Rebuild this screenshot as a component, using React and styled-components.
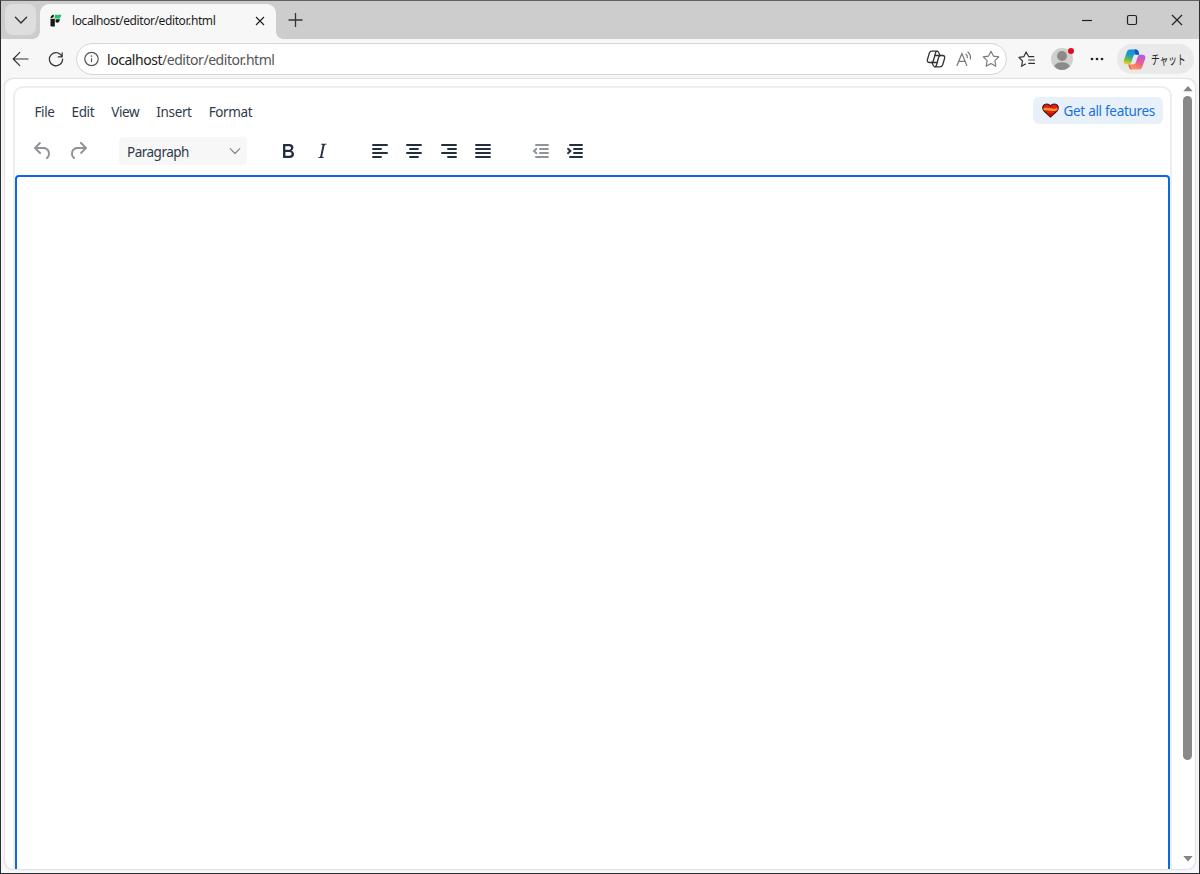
import styled, { createGlobalStyle } from 'styled-components'

export default function App() {
	return (
		<Window>
			<GlobalStyle />
			<TitleBar>
				<TabMenuButton>
					<ChevronIcon width={14} color='#333' />
				</TabMenuButton>
				<Tab>
					<SiteIcon />
					<TabTitle>localhost/editor/editor.html</TabTitle>
					<CrossIcon size={10} />
				</Tab>
				<NewTab>
					<PlusIcon />
				</NewTab>
				<WindowControls>
					<svg width='12' height='12' viewBox='0 0 12 12'>
						<path d='M1 6.5h10' stroke='#222' strokeWidth='1.2' />
					</svg>
					<svg width='12' height='12' viewBox='0 0 12 12'>
						<rect x='1.5' y='1.5' width='9' height='9' rx='1.5' fill='none' stroke='#222' strokeWidth='1.2' />
					</svg>
					<CrossIcon size={12} />
				</WindowControls>
			</TitleBar>
			<NavBar>
				<NavButtons>
					<BackIcon />
					<ReloadIcon />
				</NavButtons>
				<AddressBar>
					<InfoIcon />
					<Url>
						localhost<span>/editor/editor.html</span>
					</Url>
					<AddressActions>
						<SwirlOutlineIcon />
						<ReadAloudIcon />
						<StarIcon />
					</AddressActions>
				</AddressBar>
				<FavoritesIcon />
				<Avatar>
					<AvatarIcon />
					<AvatarDot />
				</Avatar>
				<MoreIcon />
				<ChatButton>
					<SwirlIcon />
					<span>チャット</span>
				</ChatButton>
			</NavBar>
			<Page>
				<Editor>
					<MenuBar>
						<MenuItem>File</MenuItem>
						<MenuItem>Edit</MenuItem>
						<MenuItem>View</MenuItem>
						<MenuItem>Insert</MenuItem>
						<MenuItem>Format</MenuItem>
						<Promotion>
							<HeartIcon />
							<span>Get all features</span>
						</Promotion>
					</MenuBar>
					<Toolbar>
						<Group $gap={11.5}>
							<ToolIcon name='undo' disabled />
							<ToolIcon name='redo' disabled />
						</Group>
						<FormatSelect>
							<span>Paragraph</span>
							<ChevronIcon width={12} color='#83888e' />
						</FormatSelect>
						<Group $start={28.5}>
							<ToolIcon name='bold' />
							<ToolIcon name='italic' />
						</Group>
						<Group $start={33.5}>
							<ToolIcon name='alignLeft' />
							<ToolIcon name='alignCenter' />
							<ToolIcon name='alignRight' />
							<ToolIcon name='alignJustify' />
						</Group>
						<Group $start={33.5}>
							<ToolIcon name='outdent' disabled />
							<ToolIcon name='indent' />
						</Group>
					</Toolbar>
					<EditArea />
				</Editor>
				<Scrollbar>
					<svg width='10' height='7' viewBox='0 0 10 7'>
						<path d='M5 0 9.7 5.3H.3Z' fill='#858585' />
					</svg>
					<Thumb />
					<svg width='10' height='7' viewBox='0 0 10 7'>
						<path d='M5 5.5.3 0h9.4Z' fill='#858585' />
					</svg>
				</Scrollbar>
			</Page>
		</Window>
	)
}

const toolPaths = {
	undo: 'M6.4 8H12c3.7 0 6.2 2 6.8 5.1.6 2.7-.4 5.6-2.3 6.8a1 1 0 0 1-1-1.8c1.1-.6 1.8-2.7 1.4-4.6-.5-2.1-2.1-3.5-4.9-3.5H6.4l3.3 3.3a1 1 0 1 1-1.4 1.4l-5-5a1 1 0 0 1 0-1.4l5-5a1 1 0 0 1 1.4 1.4L6.4 8Z',
	redo: 'M17.6 10H12c-2.8 0-4.4 1.4-4.9 3.5-.4 2 .3 4 1.4 4.6a1 1 0 1 1-1 1.8c-2-1.2-2.9-4.1-2.3-6.8.6-3 3-5.1 6.8-5.1h5.6l-3.3-3.3a1 1 0 1 1 1.4-1.4l5 5a1 1 0 0 1 0 1.4l-5 5a1 1 0 0 1-1.4-1.4l3.3-3.3Z',
	bold: 'M7.8 19c-.3 0-.5 0-.6-.2l-.2-.5V5.7c0-.2 0-.4.2-.5l.6-.2h5c1.5 0 2.7.3 3.5 1 .7.6 1.1 1.4 1.1 2.5a3 3 0 0 1-.6 1.9c-.4.6-1 1-1.6 1.2.4.1.9.3 1.3.6s.8.7 1 1.2c.4.4.5 1 .5 1.6 0 1.3-.4 2.3-1.3 3-.8.7-2.1 1-3.8 1H7.8Zm5-8.3c.6 0 1.2-.1 1.6-.5.4-.3.6-.7.6-1.3 0-1.1-.8-1.7-2.3-1.7H9.3v3.5h3.4Zm.5 6c.7 0 1.3-.1 1.7-.4.4-.4.6-.9.6-1.5s-.2-1-.7-1.4c-.4-.3-1-.4-2-.4H9.4v3.8h4Z',
	italic: 'm16.7 4.7-.1.9h-.3c-.6 0-1 0-1.4.3-.3.3-.4.6-.5 1.1l-2.1 9.8v.6c0 .5.4.8 1.4.8h.2l-.2.8H8l.2-.8h.2c1.1 0 1.8-.5 2-1.5l2-9.8.1-.5c0-.6-.4-.8-1.4-.8h-.3l.2-.9h5.8Z',
}

const toolLines = {
	alignLeft: 'M5 6h14M5 10h8M5 14h14M5 18h8',
	alignCenter: 'M5 6h14M8 10h8M5 14h14M8 18h8',
	alignRight: 'M5 6h14M11 10h8M5 14h14M11 18h8',
	alignJustify: 'M5 6h14M5 10h14M5 14h14M5 18h14',
	outdent: 'M7 6h12M11 10h8M11 14h8M7 18h12M7.4 9.8 5 12l2.4 2.2',
	indent: 'M7 6h12M11 10h8M11 14h8M7 18h12M5 9.8 7.4 12 5 14.2',
}

function ToolIcon({ name, disabled }) {
	return (
		<ToolButton $disabled={disabled}>
			<svg width='24' height='24' viewBox='0 0 24 24'>
				{toolPaths[name] ? (
					<path d={toolPaths[name]} fill='currentColor' fillRule='evenodd' />
				) : (
					<path d={toolLines[name]} fill='none' stroke='currentColor' strokeWidth='1.9' strokeLinecap='round' />
				)}
			</svg>
		</ToolButton>
	)
}

function ChevronIcon({ width, color }) {
	return (
		<svg width={width} height={width} viewBox='0 0 12 12'>
			<path d='m1.2 3.7 4.8 4.8 4.8-4.8' fill='none' stroke={color} strokeWidth='1.2' strokeLinecap='round' strokeLinejoin='round' />
		</svg>
	)
}

function CrossIcon({ size }) {
	return (
		<svg width={size} height={size} viewBox={`0 0 ${size} ${size}`}>
			<path d={`M1 1 ${size - 1} ${size - 1}M${size - 1} 1 1 ${size - 1}`} stroke='#222' strokeWidth='1.2' />
		</svg>
	)
}

function PlusIcon() {
	return (
		<svg width='16' height='16' viewBox='0 0 16 16'>
			<path d='M7.5 1v14M.5 8h14' stroke='#333' strokeWidth='1.3' />
		</svg>
	)
}

function SiteIcon() {
	return (
		<svg width='12' height='13' viewBox='0 0 12 13'>
			<path d='M.5 4.8h4.3v7.7H1.8a1.3 1.3 0 0 1-1.3-1.3Z' fill='#151918' />
			<path d='M.5 4Q.7 1 4 .8L3.6 3 2 4ZM5.6 5.2H10q-.4 3-2.6 3.6l-1.8-.5Z' fill='#151918' />
			<path d='M5 .8h6.4L10 4.6H4.4Z' fill='#18c763' />
		</svg>
	)
}

function BackIcon() {
	return (
		<svg width='17' height='16' viewBox='0 0 17 16'>
			<path d='M16 8H1.2M7.8 1.4 1.2 8l6.6 6.6' fill='none' stroke='#333' strokeWidth='1.2' strokeLinecap='round' strokeLinejoin='round' />
		</svg>
	)
}

function ReloadIcon() {
	return (
		<svg width='16' height='16' viewBox='0 0 16 16'>
			<path d='M14.1 5.7A6.6 6.6 0 1 0 14.6 8M14.2 1.8v4h-4' fill='none' stroke='#333' strokeWidth='1.2' strokeLinecap='round' strokeLinejoin='round' />
		</svg>
	)
}

function InfoIcon() {
	return (
		<svg width='16' height='16' viewBox='0 0 16 16'>
			<circle cx='7.5' cy='8' r='6.7' fill='none' stroke='#555' strokeWidth='1.2' />
			<path d='M7.5 7.2v4' stroke='#555' strokeWidth='1.2' />
			<circle cx='7.5' cy='5' r='.85' fill='#555' />
		</svg>
	)
}

function SwirlOutlineIcon() {
	return (
		<svg width='20' height='18' viewBox='0 0 20 18'>
			<g fill='none' stroke='#333' strokeWidth='1.3' strokeLinejoin='round' strokeLinecap='round'>
				<path d='M13.6 4.8 12.8 2.6Q12.3 1.2 10.8 1.2H6Q4 1.2 3.4 3L1.5 9.2q-.8 3.3 1.8 3.3h2.2q1.4 0 1.8-1.5L9.5 3q.5-1.8 2-1.8' />
				<path d='m6.4 13.2.8 2.2q.5 1.4 2 1.4H14q2 0 2.6-1.8l1.9-6.2q.8-3.3-1.8-3.3h-2.2q-1.4 0-1.8 1.5L10.5 15q-.5 1.8-2 1.8' />
				<path d='M9 5.5h5.5M5.5 12.5H11' />
			</g>
		</svg>
	)
}

function ReadAloudIcon() {
	return (
		<svg width='16' height='16' viewBox='0 0 16 16'>
			<path d='m1 14.5 4.9-12 4.9 12M2.7 10.4h6.4M10 3.2q1.6 1.3 1.3 3.4M12 1.2Q15 3.8 14.4 7.8' fill='none' stroke='#777' strokeWidth='1.2' strokeLinecap='round' />
		</svg>
	)
}

function StarIcon() {
	return (
		<svg width='18' height='18' viewBox='0 0 18 18'>
			<path d='m9 1.2 2.4 4.9 5.4.8-3.9 3.8.9 5.5L9 13.6l-4.8 2.6.9-5.5-3.9-3.8 5.4-.8Z' fill='none' stroke='#777' strokeWidth='1.1' strokeLinejoin='round' />
		</svg>
	)
}

function FavoritesIcon() {
	return (
		<svg width='18' height='17' viewBox='0 0 18 17'>
			<path d='M15.8 5.7h-5L8.1 1 5.8 5.7l-4.9.7 3.6 3.6-.9 5.3 3.9-2.2M10.7 9h5.8M10.7 12.3h5.8' fill='none' stroke='#333' strokeWidth='1.2' strokeLinecap='round' strokeLinejoin='round' />
		</svg>
	)
}

function AvatarIcon() {
	return (
		<svg width='22' height='22' viewBox='0 0 22 22'>
			<circle cx='11' cy='11' r='11' fill='#d2d0ce' />
			<circle cx='11' cy='8' r='5' fill='#8c8a88' />
			<path d='M3.2 18.3Q5 14.2 11 14.2t7.8 4.1Q15.8 22 11 22t-7.8-3.7Z' fill='#8c8a88' />
		</svg>
	)
}

function MoreIcon() {
	return (
		<svg width='14' height='4' viewBox='0 0 14 4'>
			<g fill='#222'>
				<circle cx='2' cy='2' r='1.35' />
				<circle cx='7' cy='2' r='1.35' />
				<circle cx='12' cy='2' r='1.35' />
			</g>
		</svg>
	)
}

function SwirlIcon() {
	return (
		<svg width='23' height='21' viewBox='0 0 23 21'>
			<defs>
				<linearGradient id='cool' x1='.6' y1='0' x2='.3' y2='1'>
					<stop offset='0' stopColor='#1686e8' />
					<stop offset='.45' stopColor='#19a5b8' />
					<stop offset='.75' stopColor='#7cbd42' />
					<stop offset='1' stopColor='#f3cf20' />
				</linearGradient>
				<linearGradient id='warm' x1='.7' y1='0' x2='.3' y2='1'>
					<stop offset='0' stopColor='#a95ced' />
					<stop offset='.5' stopColor='#ed5b91' />
					<stop offset='1' stopColor='#ff9e48' />
				</linearGradient>
			</defs>
			<path d='M5.2 15.3h1q1 .2 1.4 1.6l.6 2q.5 1.7 2.4 1.7H8.8Q7 20.6 6.2 18.9Z' fill='#ef5a36' />
			<path d='M16.2 5.3 15.2 2Q14.6.4 12.8.4H7Q4.6.4 3.9 2.8L.9 11q-1 4.3 2.4 4.3h2.4q2 0 2.6-2l2-6.1q.5-1.9 2.4-1.9Z' fill='url(#cool)' />
			<path d='m6.8 15.5 1 3.4q.6 1.7 2.4 1.7H16q2.4 0 3.1-2.4l3-8.2q1-4.3-2.4-4.3h-2.4q-2 0-2.6 2l-2 6q-.5 1.8-2.4 1.8Z' fill='url(#warm)' />
			<path d='M11.5.4h1.3q1.8 0 2.4 1.6l1.2 3.7h-3.8Z' fill='#174fc5' />
		</svg>
	)
}

function HeartIcon() {
	return (
		<svg width='17' height='15' viewBox='0 0 17 15'>
			<path d='M8.5 14 2 8Q.2 6 1 3.5 2 1 4.7 1q2.5 0 3.8 2Q9.8 1 12.3 1 15 1 16 3.5q.8 2.5-1 4.5Z' fill='#e51c16' stroke='#42150f' strokeWidth='1.1' />
			<path d='M1.4 5.2q3.5-.9 7.1.1 3.6.9 7.1-.3l-.6 2.4q-3.1 1-6.6.3T2 7.6Z' fill='#ff9a23' />
			<path d='m4.4 10.2 4.1 3.3 4.1-3.3Z' fill='#b51212' />
		</svg>
	)
}

const GlobalStyle = createGlobalStyle`
	* {
		box-sizing: border-box;
	}
	body {
		margin: 0;
		overflow: hidden;
		font-family: 'Noto Sans', 'Open Sans', 'Noto Sans CJK JP', sans-serif;
	}
	svg {
		display: block;
		flex: none;
	}
`

const Window = styled.div`
	width: 1200px;
	height: 874px;
	display: flex;
	flex-direction: column;
	background: #f7f7f7;
	border: 1px solid #292d38;
	border-top-color: #625f63;
	overflow: hidden;
`

const TitleBar = styled.div`
	flex: none;
	height: 38px;
	display: flex;
	background: #cdcdcd;
	padding-left: 4px;
`

const TabMenuButton = styled.div`
	width: 31px;
	height: 31px;
	margin-top: 3px;
	display: grid;
	place-items: center;
	border-radius: 8px;
	background: #dedede;
`

const Tab = styled.div`
	position: relative;
	width: 236px;
	height: 35px;
	margin: 3px 0 0 4px;
	padding: 0 11px 2px 10px;
	display: flex;
	align-items: center;
	gap: 10px;
	background: #f7f7f7;
	border-radius: 9px 9px 0 0;

	&::before,
	&::after {
		content: '';
		position: absolute;
		bottom: 0;
		width: 7px;
		height: 7px;
	}
	&::before {
		right: 100%;
		background: radial-gradient(circle at 0 0, transparent 6.5px, #f7f7f7 7px);
	}
	&::after {
		left: 100%;
		background: radial-gradient(circle at 100% 0, transparent 6.5px, #f7f7f7 7px);
	}
`

const TabTitle = styled.span`
	flex: 1;
	font-size: 12px;
	letter-spacing: -0.4px;
	color: #1d1d1d;
	white-space: nowrap;
`

const NewTab = styled.div`
	padding: 11px 0 0 12px;
`

const WindowControls = styled.div`
	margin-left: auto;
	padding-right: 16.5px;
	display: flex;
	align-items: center;
	gap: 33px;
`

const NavBar = styled.div`
	flex: none;
	height: 40px;
	padding: 0 5px 0 11px;
	display: flex;
	align-items: center;
`

const NavButtons = styled.div`
	display: flex;
	gap: 19px;
`

const AddressBar = styled.div`
	width: 931px;
	height: 32px;
	margin-left: 12px;
	margin-right: 10.5px;
	padding: 0 6px 0 7px;
	display: flex;
	align-items: center;
	background: #fff;
	border: 1px solid #d5d5d5;
	border-radius: 16px;
`

const Url = styled.span`
	margin-left: 7px;
	font-size: 14px;
	letter-spacing: -0.46px;
	color: #222;
	white-space: nowrap;

	span {
		color: #555;
	}
`

const AddressActions = styled.div`
	margin-left: auto;
	display: flex;
	align-items: center;
	gap: 10px;
`

const Avatar = styled.div`
	position: relative;
	margin: 0 17px 0 15.5px;
`

const AvatarDot = styled.i`
	position: absolute;
	top: 0;
	right: -1px;
	width: 6px;
	height: 6px;
	border-radius: 50%;
	background: #e00b1c;
`

const ChatButton = styled.div`
	width: 77px;
	height: 30px;
	margin-left: auto;
	padding-left: 6px;
	display: flex;
	align-items: center;
	gap: 5px;
	border-radius: 15px;
	background: #e9e9e9;
	color: #222;
	font-family: 'Noto Sans CJK JP', sans-serif;
	font-size: 13px;
	white-space: nowrap;

	span {
		margin-top: -2px;
		transform: scaleX(0.67);
		transform-origin: left;
	}
`

const Page = styled.div`
	flex: none;
	width: 1190px;
	height: 790px;
	margin-left: 4px;
	display: flex;
	justify-content: space-between;
	padding: 7px 2px 0 8px;
	background: #fff;
	border-radius: 8px;
	box-shadow: 0 0 2px #aaa;
	overflow: hidden;
`

const Editor = styled.div`
	width: 1159px;
	height: 830px;
	display: flex;
	flex-direction: column;
	border: 2px solid #eee;
	border-radius: 10px;
	overflow: hidden;
`

const MenuBar = styled.div`
	flex: none;
	height: 47px;
	padding: 0 7px 0 11px;
	display: flex;
	align-items: center;
`

const MenuItem = styled.span`
	padding: 1px 8.6px 0 8.4px;
	font-size: 13.5px;
	letter-spacing: -0.36px;
	color: #2f3b49;
`

const Promotion = styled.div`
	width: 130px;
	height: 27px;
	margin: 0 0 2px auto;
	padding-left: 8.5px;
	display: flex;
	align-items: center;
	gap: 5px;
	border-radius: 6px;
	background: #e8f1fa;
	color: #1672e3;
	font-size: 13.5px;
	letter-spacing: -0.3px;
	white-space: nowrap;
`

const Toolbar = styled.div`
	flex: none;
	height: 40px;
	padding: 0 0 8px 15.5px;
	display: flex;
	align-items: center;
`

const Group = styled.div`
	display: flex;
	gap: ${({ $gap }) => $gap || 10.5}px;
	margin-left: ${({ $start }) => $start || 0}px;
`

const ToolButton = styled.div`
	color: ${({ $disabled }) => ($disabled ? '#909498' : '#222f3e')};
`

const FormatSelect = styled.div`
	width: 128px;
	height: 28px;
	margin-left: 29px;
	padding: 0 6px 0 8px;
	display: flex;
	align-items: center;
	justify-content: space-between;
	border-radius: 4px;
	background: #f7f7f7;
	color: #2f3b49;
	font-size: 13.5px;
	letter-spacing: -0.5px;

	span {
		padding-top: 2px;
	}
`

const EditArea = styled.div`
	flex: 1;
	border: 2px solid #096ad9;
	border-radius: 4px 4px 0 0;
`

const Scrollbar = styled.div`
	width: 10px;
	height: 777px;
	display: flex;
	flex-direction: column;
	justify-content: space-between;
`

const Thumb = styled.div`
	width: 9px;
	height: 664px;
	margin: 3px 0 auto;
	border-radius: 5px;
	background: #898989;
`
